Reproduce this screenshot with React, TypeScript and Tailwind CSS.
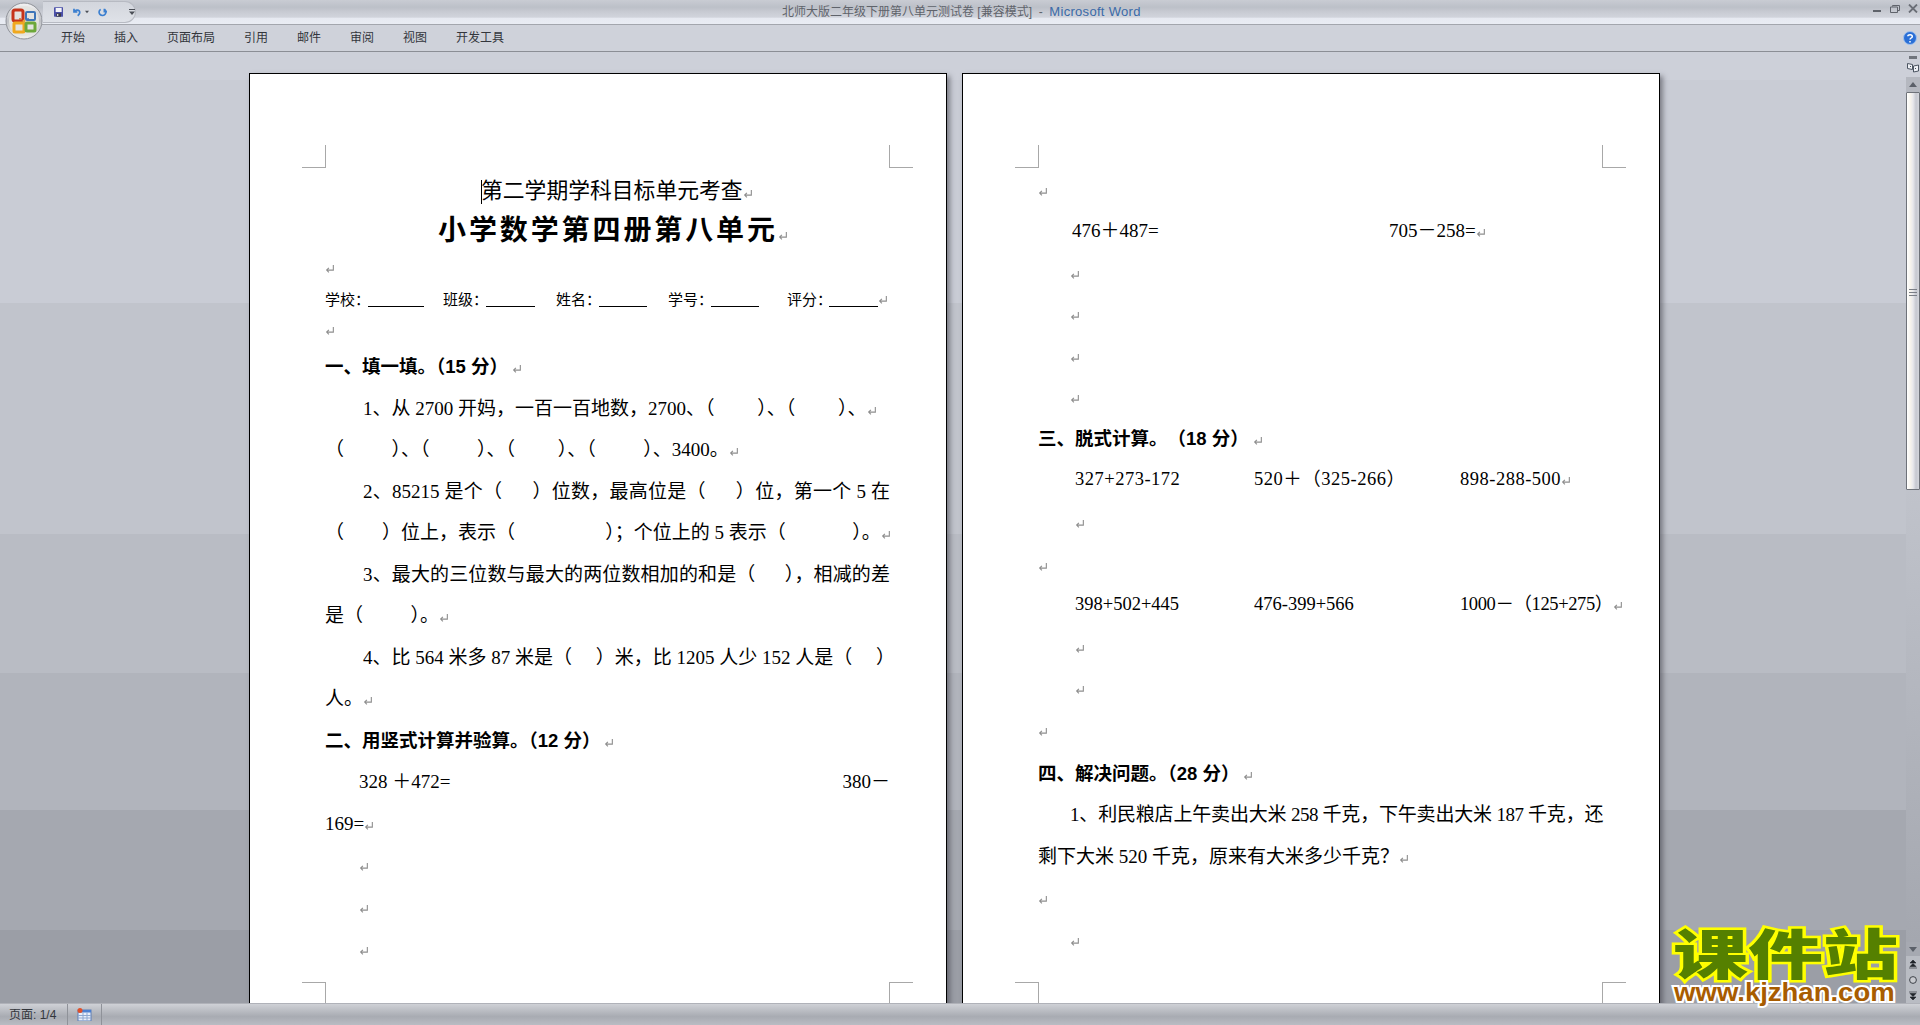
import type { ReactNode } from "react";
import clsx from "clsx";
import { twMerge } from "tailwind-merge";

const song = "font-['Liberation_Serif','Noto_Sans_CJK_SC',serif]";
const hei = "font-['Liberation_Sans','Noto_Sans_CJK_SC',sans-serif]";

function Mark({ className }: { className?: string }) {
  return (
    <svg viewBox="0 0 9 9" className={clsx("inline-block h-[10px] w-[10px] align-[-1px]", className)}>
      <path d="M7.5 1v4.5H1.5M3.5 3.5l-2 2 2 2" fill="none" stroke="#8e8e8e" strokeWidth="1" />
    </svg>
  );
}

function Line({ children, className }: { children?: ReactNode; className?: string }) {
  return (
    <div className={twMerge("h-[41.5px] whitespace-pre text-[19px] leading-[41.5px] text-black", song, className)}>
      {children}
    </div>
  );
}

function Heading({ children, className }: { children: ReactNode; className?: string }) {
  return (
    <div className={twMerge("h-[41.5px] whitespace-pre text-[18.5px] font-bold leading-[41.5px] text-black", hei, className)}>
      {children}
      <Mark className="ml-1" />
    </div>
  );
}

function Blank({ label, labelW, lineW, gap }: { label: string; labelW: string; lineW: string; gap: string }) {
  return (
    <div className={clsx("flex items-center", gap)}>
      <span className={clsx("text-[15px] text-black", labelW)}>{label}</span>
      <span className={clsx("mt-[12px] h-px bg-black", lineW)} />
    </div>
  );
}

function Corners({ bottom }: { bottom?: boolean }) {
  return bottom ? (
    <>
      <div className="absolute left-[52px] top-[908px] h-[23px] w-[24px] border-r border-t border-[#a8a8a8]" />
      <div className="absolute right-[33px] top-[908px] h-[23px] w-[24px] border-l border-t border-[#a8a8a8]" />
    </>
  ) : (
    <>
      <div className="absolute left-[52px] top-[71px] h-[23px] w-[24px] border-b border-r border-[#a8a8a8]" />
      <div className="absolute right-[33px] top-[71px] h-[23px] w-[24px] border-b border-l border-[#a8a8a8]" />
    </>
  );
}

function Page({ children }: { children: ReactNode }) {
  return (
    <div className="relative h-[1000px] w-[698px] shrink-0 border border-black bg-white pl-[75px] pr-[56px] pt-[96px] shadow-[3px_3px_5px_rgba(60,60,70,0.55)]">
      <Corners />
      <Corners bottom />
      {children}
    </div>
  );
}

function OfficeButton() {
  return (
    <svg viewBox="0 0 38 38" className="absolute left-[5px] top-[2px] h-[38px] w-[38px]">
      <defs>
        <linearGradient id="orb" x1="0" y1="0" x2="0" y2="1">
          <stop offset="0" stopColor="#f4f4f4" />
          <stop offset="0.5" stopColor="#bfc1c6" />
          <stop offset="1" stopColor="#f2f2ee" />
        </linearGradient>
      </defs>
      <circle cx="19" cy="19" r="18" fill="url(#orb)" stroke="#8f9299" />
      <circle cx="19" cy="19" r="15" fill="#e4e4e0" />
      <rect x="8" y="8" width="10" height="11" rx="2" fill="none" stroke="#c6341a" strokeWidth="3" />
      <rect x="21" y="10" width="9" height="8" rx="1" fill="none" stroke="#3f76b8" strokeWidth="2" />
      <rect x="9" y="21" width="10" height="9" rx="1" fill="none" stroke="#f0a81e" strokeWidth="3" />
      <rect x="21" y="21" width="9" height="8" rx="1" fill="none" stroke="#6da83a" strokeWidth="3" />
      <circle cx="19" cy="19" r="1.5" fill="#e8a23a" />
      <circle cx="15" cy="17" r="1" fill="#d26a2a" />
      <circle cx="23" cy="17" r="1" fill="#3f76b8" />
    </svg>
  );
}

function QuickAccess() {
  return (
    <div className="ml-[43px] mt-[1px] flex h-[22px] w-[93px] items-center rounded-r-full border border-l-0 border-[#b7bac2] bg-gradient-to-b from-[#d3d6dd] to-[#dfe2e8]">
      <svg viewBox="0 0 14 14" className="ml-[11px] h-[14px] w-[14px]">
        <rect width="14" height="14" rx="1" fill="#4a4fa8" />
        <rect x="2.5" y="1" width="9" height="6" fill="#f3f3f8" />
        <rect x="3.5" y="9" width="7" height="5" fill="#3a3a44" />
        <rect x="4.5" y="10" width="2" height="3" fill="#d8d8d8" />
      </svg>
      <svg viewBox="0 0 14 14" className="ml-[9px] h-[14px] w-[14px]">
        <path d="M3 2v5h5M3.5 6.5C5 4 9 3 11 5.5c1.3 2 .6 5-2.5 7" fill="none" stroke="#3b7fd0" strokeWidth="2.6" />
      </svg>
      <svg viewBox="0 0 6 4" className="ml-[3px] h-[4px] w-[6px]">
        <path d="M0 0h6L3 4z" fill="#4b4f57" />
      </svg>
      <svg viewBox="0 0 14 14" className="ml-[9px] h-[14px] w-[14px]">
        <path d="M9.5 2v4.5H14M10 3C12.5 5 12.5 8.5 10.5 10.5 8 13 4 12.5 2.5 10 1 7.5 2 4.5 4 3" fill="none" stroke="#3b7fd0" strokeWidth="2.4" />
      </svg>
      <svg viewBox="0 0 6 6" className="ml-[22px] h-[6px] w-[6px] shrink-0">
        <path d="M0 0h6v1H0zM0 2.5h6L3 6z" fill="#4b4f57" />
      </svg>
    </div>
  );
}

function WindowControls() {
  return (
    <div className="ml-auto flex items-start">
      <div className="mt-[10px] h-[2px] w-[8px] bg-[#5f636b]" />
      <svg viewBox="0 0 10 8" className="ml-[9px] mt-[5px] h-[8px] w-[10px]">
        <path d="M2.5 1.5V.5h7v5h-2M.5 2h7v5.5h-7z" fill="none" stroke="#5f636b" />
      </svg>
      <svg viewBox="0 0 10 9" className="ml-[8px] mr-[2px] mt-[4px] h-[9px] w-[10px]">
        <path d="M1 .5l8 8M9 .5l-8 8" fill="none" stroke="#6a6e76" strokeWidth="1.8" />
      </svg>
    </div>
  );
}

function Scrollbar() {
  return (
    <div className="flex w-[14px] shrink-0 flex-col items-center">
      <div className="mt-[4px] h-[3px] w-[8px] bg-[#70747c]" />
      <svg viewBox="0 0 12 12" className="mt-[3px] h-[12px] w-[12px]">
        <path d="M.5 1.5l5 1v5l-5-1zM6.5 4l5-1v6l-5 1z" fill="#eef0f5" stroke="#4c5562" />
        <path d="M3 4l1 1M8 6l1 1" stroke="#4c5562" />
      </svg>
      <div className="mt-[3px] flex h-[15px] w-full items-center justify-center bg-[#b5b8c0]">
        <div className="border-x-[4px] border-b-[5px] border-x-transparent border-b-[#5b6069]" />
      </div>
      <div className="relative h-[398px] w-full rounded-[1px] border border-[#6e7279] bg-[linear-gradient(to_right,#ffffff,#f6f3ec_30%,#e8e8ec_50%,#c6c8d0_75%,#d4d6dc)]">
        <div className="absolute left-[2px] top-[196px] h-[7px] w-[8px] border-y border-[#7a7e86] bg-[linear-gradient(#0000_2px,#7a7e86_2px,#7a7e86_3px,#0000_3px)]" />
      </div>
      <div className="w-full flex-1 bg-[linear-gradient(#c0c3cb,#a4a7af)]" />
      <div className="flex h-[14px] w-full items-center justify-center bg-[#a6a9b1]">
        <div className="border-x-[4px] border-t-[5px] border-x-transparent border-t-[#5b6069]" />
      </div>
      <div className="flex h-[47px] w-full flex-col items-center gap-[7px] bg-[#b9bcc3] pt-[4px]">
        <svg viewBox="0 0 8 9" className="h-[9px] w-[8px]">
          <path d="M4 0L7 3H1zM4 3.5L7 6.5H1zM0 8h8" fill="#20242a" stroke="#20242a" strokeWidth="0.6" />
        </svg>
        <svg viewBox="0 0 8 8" className="h-[8px] w-[8px]">
          <circle cx="4" cy="4" r="3.4" fill="#c8cacf" stroke="#3f434a" />
        </svg>
        <svg viewBox="0 0 8 9" className="h-[9px] w-[8px]">
          <path d="M4 9L7 6H1zM4 5.5L7 2.5H1zM0 1h8" fill="#20242a" stroke="#20242a" strokeWidth="0.6" />
        </svg>
      </div>
    </div>
  );
}

function LeftPage() {
  return (
    <Page>
      <div className="h-[38px] whitespace-pre pl-[156px] font-['Noto_Sans_CJK_SC',sans-serif] text-[21.8px] leading-[38px] text-black">
        <span className="mr-[-1px] inline-block h-[24px] w-px bg-black align-middle" />
        第二学期学科目标单元考查
        <Mark />
      </div>
      <div className={clsx("h-[46px] whitespace-pre pl-[113px] text-[28px] font-bold leading-[46px] tracking-[2.9px] text-black", hei)}>
        小学数学第四册第八单元
        <Mark />
      </div>
      <div className="flex h-[30px] items-center"><Mark /></div>
      <div className={clsx("flex h-[32px] items-center whitespace-pre", hei)}>
        <Blank label="学校：" labelW="w-[43px]" lineW="w-[56px]" gap="mr-[19px]" />
        <Blank label="班级：" labelW="w-[43px]" lineW="w-[49px]" gap="mr-[21px]" />
        <Blank label="姓名：" labelW="w-[43px]" lineW="w-[48px]" gap="mr-[21px]" />
        <Blank label="学号：" labelW="w-[43px]" lineW="w-[48px]" gap="mr-[28px]" />
        <Blank label="评分：" labelW="w-[42px]" lineW="w-[49px]" gap="" />
        <Mark />
      </div>
      <div className="flex h-[30px] items-center"><Mark /></div>
      <Heading>一、填一填。（15 分）</Heading>
      <Line className="pl-[38px]">1、从 2700 开妈，一百一百地数，2700、（         ）、（         ）、<Mark /></Line>
      <Line>（          ）、（          ）、（         ）、（          ）、3400。<Mark /></Line>
      <Line className="whitespace-pre-wrap pl-[38px] [text-align-last:justify]">2、85215 是个（      ）位数，最高位是（      ）位，第一个 5 在</Line>
      <Line>（        ）位上，表示（                   ）；个位上的 5 表示（              ）。<Mark /></Line>
      <Line className="whitespace-pre-wrap pl-[38px] [text-align-last:justify]">3、最大的三位数与最大的两位数相加的和是（      ），相减的差</Line>
      <Line>是（          ）。<Mark /></Line>
      <Line className="whitespace-pre-wrap pl-[38px] [text-align-last:justify]">4、比 564 米多 87 米是（     ）米，比 1205 人少 152 人是（     ）</Line>
      <Line>人。<Mark /></Line>
      <Heading>二、用竖式计算并验算。（12 分）</Heading>
      <Line className="flex justify-between pl-[34px]">
        <span>328 ＋472=</span>
        <span>380－</span>
      </Line>
      <Line>169=<Mark /></Line>
      <Line className="h-[42px] pl-[34px]"><Mark /></Line>
      <Line className="h-[42px] pl-[34px]"><Mark /></Line>
      <Line className="pl-[34px]"><Mark /></Line>
    </Page>
  );
}

function RightPage() {
  return (
    <Page>
      <div className="flex h-[40px] items-center pt-[4px]"><Mark /></div>
      <Line className="flex pl-[34px]">
        <span className="w-[317px] shrink-0">476＋487=</span>
        <span>705－258=<Mark /></span>
      </Line>
      <Line className="pl-[32px]"><Mark /></Line>
      <Line className="pl-[32px]"><Mark /></Line>
      <Line className="pl-[32px]"><Mark /></Line>
      <Line className="pl-[32px]"><Mark /></Line>
      <Heading className="[text-spacing-trim:space-all]">三、脱式计算。（18 分）</Heading>
      <Line className="flex pl-[37px] text-[18.5px] leading-[41.5px] tracking-[0.5px]">
        <span className="w-[179px] shrink-0">327+273-172</span>
        <span className="w-[206px] shrink-0">520＋（325-266）</span>
        <span className="shrink-0">898-288-500<Mark /></span>
      </Line>
      <Line className="h-[43px] pl-[37px]"><Mark /></Line>
      <Line><Mark /></Line>
      <Line className="-mt-[1px] flex pl-[37px] text-[18.5px] leading-[41.5px]">
        <span className="w-[179px] shrink-0">398+502+445</span>
        <span className="w-[206px] shrink-0">476-399+566</span>
        <span className="shrink-0 tracking-[-0.4px]">1000－（125+275）<Mark /></span>
      </Line>
      <Line className="pl-[37px]"><Mark /></Line>
      <Line className="pl-[37px]"><Mark /></Line>
      <Line className="h-[44px]"><Mark /></Line>
      <Heading>四、解决问题。（28 分）</Heading>
      <Line className="whitespace-pre-wrap pl-[32px] tracking-[-0.5px] [text-align-last:justify]">1、利民粮店上午卖出大米 258 千克，下午卖出大米 187 千克，还</Line>
      <Line>剩下大米 520 千克，原来有大米多少千克？<Mark /></Line>
      <Line><Mark /></Line>
      <Line className="pl-[32px]"><Mark /></Line>
    </Page>
  );
}

export default function App() {
  return (
    <div className="relative flex h-screen w-screen flex-col overflow-hidden bg-[#cdd0d9] font-['Liberation_Sans','Noto_Sans_CJK_SC',sans-serif]">
      <div className="flex h-[25px] shrink-0 items-start border-b border-[#a3a6ad] bg-[linear-gradient(#c9ccd3_0,#bcc0c8_30%,#c8cbd3_50%,#d1d4dc_72%,#e6e9f1_75%,#e9ecf3_100%)]">
        <QuickAccess />
        <div className="ml-[646px] mt-[4px] whitespace-pre text-[12px] leading-[16px] text-[#5f636b]">
          北师大版二年级下册第八单元测试卷 [兼容模式]  -  <span className="text-[13px] tracking-[0.3px] text-[#3a6aa8]">Microsoft Word</span>
        </div>
        <WindowControls />
      </div>

      <div className="flex h-[27px] shrink-0 items-center gap-[29px] border-b border-[#8b8e95] bg-[#cfd2da] pl-[61px] pr-[3px] text-[12px] text-[#33363c]">
        <span>开始</span>
        <span>插入</span>
        <span>页面布局</span>
        <span>引用</span>
        <span>邮件</span>
        <span>审阅</span>
        <span>视图</span>
        <span>开发工具</span>
        <svg viewBox="0 0 14 14" className="ml-auto h-[14px] w-[14px]">
          <circle cx="7" cy="7" r="6.5" fill="#2a6fd6" stroke="#9fc0ee" />
          <path d="M4.8 5.2C5 3.2 9.3 3 9.3 5.4c0 1.6-2.3 1.6-2.3 3.2M7 10v1.5" fill="none" stroke="#fff" strokeWidth="1.5" />
        </svg>
      </div>

      <div className="flex min-h-0 flex-1 bg-[linear-gradient(#cdd0d9_0,#cdd0d9_28px,#c9ccd5_28px,#c9ccd5_251px,#c1c4cc_251px,#c1c4cc_482px,#b9bcc4_482px,#b9bcc4_621px,#b1b4bc_621px,#b1b4bc_758px,#a5a8b0_758px,#a5a8b0_878px,#9b9ea6_878px)]">
        <div className="flex min-w-0 flex-1 gap-[15px] overflow-hidden pl-[249px] pt-[21px]">
          <LeftPage />
          <RightPage />
        </div>
        <Scrollbar />
      </div>

      <div className="flex h-[22px] shrink-0 items-center border-t border-[#b0b2b9] bg-[linear-gradient(#cfd1d6,#a8abb2_60%,#b9bcc3)] text-[12px] text-[#33363c]">
        <div className="flex h-full w-[68px] items-center border-r border-[#8f9299] pl-[9px]">页面: 1/4</div>
        <div className="flex h-full w-[34px] items-center justify-center border-r border-[#8f9299]">
          <svg viewBox="0 0 15 13" className="h-[13px] w-[15px]">
            <rect x="1" y="2" width="13" height="11" fill="#e8eefa" stroke="#5c7fb8" />
            <rect x="1" y="2" width="13" height="2.5" fill="#4c7fd0" />
            <path d="M1 7.5h13M1 10h13M6 4.5v8M10 4.5v8" stroke="#8fa8d0" />
            <circle cx="3" cy="2.5" r="2.5" fill="#e0502a" />
          </svg>
        </div>
      </div>

      <OfficeButton />

      <div className="absolute left-[1673px] top-[923px]">
        <div className="origin-left scale-x-[1.39] whitespace-pre font-['Noto_Sans_CJK_SC',sans-serif] text-[54px] font-black leading-[58px] text-[#558000] [paint-order:stroke_fill] [-webkit-text-stroke:5px_#ffff00]">
          课件站
        </div>
        <div className="origin-left scale-x-[1.1] whitespace-pre pl-[1px] text-[25px] font-bold leading-[22px] text-[#a85c00] [paint-order:stroke_fill] [-webkit-text-stroke:4px_#ffffff]">
          www.kjzhan.com
        </div>
      </div>
    </div>
  );
}
